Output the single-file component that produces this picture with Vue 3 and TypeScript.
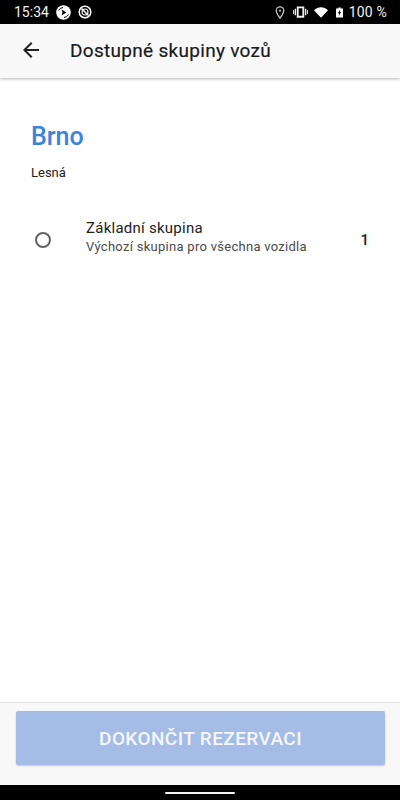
<script setup lang="ts">
const title: string = 'Dostupné skupiny vozů'
</script>

<template>
  <div class="screen">
    <div class="status">
      <div class="status-left">
        <span class="time">15:34</span>
        <svg class="ic" width="15" height="15" viewBox="0 0 15 15">
          <circle cx="7.5" cy="7.5" r="7.300" fill="#fff" />
          <path d="M5.500 4.500l5 3-5 3 1-3z" fill="#000" />
          <path d="M2.500 5.500A5.500 5.500 0 0 1 7 2.500" fill="none" stroke="#000" stroke-width="1" />
          <path d="M12.500 9.500A5.500 5.500 0 0 1 8 12.500" fill="none" stroke="#000" stroke-width="1" />
        </svg>
        <svg class="ic" width="14" height="14" viewBox="0 0 14 14" fill="none" stroke="#fff">
          <circle cx="7" cy="7" r="5.800" stroke-width="1.500" />
          <circle cx="7" cy="7" r="3" stroke-width="1.200" />
          <path d="M3.500 3.500l7 7" stroke-width="1.500" />
        </svg>
      </div>
      <div class="status-right">
        <svg class="pin" width="10" height="13" viewBox="0 0 10 14" fill="none" stroke="#c4c4c4" stroke-width="1.400">
          <path d="M5 13C3 10 1 7.500 1 5a4 4 0 0 1 8 0c0 2.500-2 5-4 8z" />
          <circle cx="5" cy="5" r="1.100" fill="#c4c4c4" stroke="none" />
        </svg>
        <svg class="vib" width="15" height="12" viewBox="0 0 16 12" fill="#efefef">
          <path d="M4 0h8v12H4zM6 2v8h4V2z" fill-rule="evenodd" />
          <path d="M1.800 2.500h1.400v7H1.800zM0 4h1v4H0zM12.800 2.500h1.400v7h-1.400zM15 4h1v4h-1z" />
        </svg>
        <svg width="14" height="11" viewBox="0 0 16 12"><path d="M0 3.500C4.500-1 11.500-1 16 3.500L8 12z" fill="#fff" /></svg>
        <svg class="bat" width="7" height="13" viewBox="0 0 9 13">
          <path d="M3 0h3v1.200h3V13H0V1.200h3z" fill="#fff" />
          <path d="M5 3L2.500 7.500H4L3.500 11 6.500 6H5z" fill="#000" />
        </svg>
        <span class="pct">100 %</span>
      </div>
    </div>

    <header class="appbar">
      <svg class="back" width="24" height="24" viewBox="0 0 24 24">
        <path d="M20 11H7.830l5.590-5.590L12 4l-8 8 8 8 1.410-1.410L7.830 13H20v-2z" fill="#212121" />
      </svg>
      <h1 class="appbar-title">{{ title }}</h1>
    </header>

    <main class="content">
      <h2 class="city">Brno</h2>
      <p class="place">Lesná</p>
      <div class="group">
        <span class="radio"></span>
        <div class="group-text">
          <div class="group-name">Základní skupina</div>
          <div class="group-desc">Výchozí skupina pro všechna vozidla</div>
        </div>
        <span class="count">1</span>
      </div>
    </main>

    <footer class="footer">
      <button class="finish" type="button">DOKONČIT REZERVACI</button>
    </footer>

    <div class="navbar"><span class="handle"></span></div>
  </div>
</template>

<style>
html, body { margin: 0; background: #fff; }
</style>

<style scoped>
.screen {
  width: 400px;
  height: 800px;
  display: flex;
  flex-direction: column;
  font-family: Roboto, "Noto Sans", sans-serif;
  overflow: hidden;
  background: #fff;
}
.status {
  height: 24px;
  flex: none;
  background: #000;
  color: #f2f2f2;
  display: flex;
  justify-content: space-between;
  align-items: center;
  padding: 0 13px 0 14px;
  font-size: 14px;
}
.status-left, .status-right { display: flex; align-items: center; }
.status-left { gap: 7px; }
.status-right { gap: 6px; }
.vib { margin-left: 2px; }
.bat { margin-left: 2px; }
.pct { letter-spacing: 0.2px; }
.appbar {
  height: 54px;
  flex: none;
  box-sizing: border-box;
  background: #f8f8f8;
  display: flex;
  align-items: center;
  padding: 0 0 2px 19px;
  box-shadow: 0 1px 3px rgba(0, 0, 0, 0.3);
  position: relative;
}
.appbar-title {
  margin: 0 0 0 27px;
  font-size: 19px;
  font-weight: 400;
  letter-spacing: 0.3px;
  color: #1a1a1a;
  -webkit-text-stroke: 0.2px #1a1a1a;
}
.content { flex: 1; padding: 44px 31px 0 31px; }
.city {
  margin: 0;
  font-size: 25px;
  line-height: 30px;
  font-weight: 500;
  color: #3b82dc;
}
.place {
  margin: 12px 0 0;
  font-size: 13px;
  line-height: 18px;
  color: #212121;
}
.group {
  display: flex;
  align-items: center;
  margin-top: 36px;
  padding-left: 4px;
}
.radio {
  width: 12px;
  height: 12px;
  border: 2px solid #616161;
  border-radius: 50%;
  flex: none;
}
.group-text { flex: 1; margin-left: 35px; padding-bottom: 6px; }
.group-name {
  font-size: 15px;
  line-height: 20px;
  color: #212121;
  letter-spacing: 0.25px;
}
.group-desc {
  font-size: 13px;
  line-height: 18px;
  color: #4a4a4a;
  letter-spacing: 0.28px;
}
.count {
  font-size: 15px;
  font-weight: 500;
  color: #212121;
}
.footer {
  height: 83px;
  flex: none;
  box-sizing: border-box;
  background: #f8f8f8;
  border-top: 1px solid #e6e6e6;
  padding: 8px 15px 0 16px;
}
.finish {
  display: block;
  width: 100%;
  height: 54px;
  border: none;
  border-radius: 2px;
  background: #a5bde6;
  color: #f4f7fc;
  font-family: inherit;
  font-size: 19px;
  font-weight: 500;
  letter-spacing: 0.4px;
  box-shadow: 0 1px 2px rgba(0, 0, 0, 0.2);
}
.navbar {
  height: 15px;
  flex: none;
  background: #000;
  display: flex;
  justify-content: center;
  align-items: center;
  padding-top: 1px;
  box-sizing: border-box;
}
.handle {
  width: 70px;
  height: 2px;
  border-radius: 1px;
  background: #f2f2f2;
}
</style>
